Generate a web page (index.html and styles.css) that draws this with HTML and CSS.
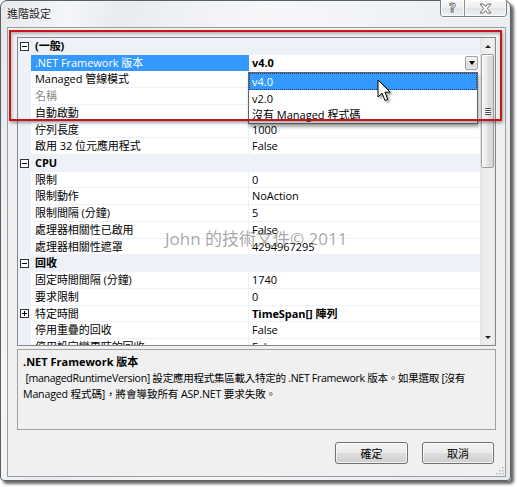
FILE: index.html
```html
<!DOCTYPE html>
<html lang="zh-Hant">
<head>
<meta charset="utf-8">
<title>進階設定</title>
<link rel="stylesheet" href="styles.css">
</head>
<body>
<div class="window">
  <div class="titlebar">
    <span class="title">進階設定</span>
    <div class="caption">
      <div class="cbtn help"><span class="qmark">?</span></div>
      <div class="cbtn close">
        <svg width="13" height="11" viewBox="0 0 13 11"><polygon points="1,1 4.5,1 6.5,3.6 8.5,1 12,1 8.3,5.5 12,10 8.5,10 6.5,7.4 4.5,10 1,10 4.7,5.5" fill="#fff" stroke="#6b6b6b" stroke-width="1" stroke-linejoin="round"/></svg>
      </div>
    </div>
  </div>
  <div class="client">
    <div class="grid">
      <div class="rows">
        <div class="row cat"><span class="gut"><i class="exp"></i></span><span class="cname">(一般)</span></div>
        <div class="row sel"><span class="gut"></span><span class="name">.NET Framework 版本</span><span class="val b">v4.0<span class="ddbtn"><i class="tri-down"></i></span></span></div>
        <div class="row"><span class="gut"></span><span class="name">Managed 管線模式</span><span class="val"></span></div>
        <div class="row"><span class="gut"></span><span class="name dis">名稱</span><span class="val"></span></div>
        <div class="row"><span class="gut"></span><span class="name">自動啟動</span><span class="val"></span></div>
        <div class="row"><span class="gut"></span><span class="name">佇列長度</span><span class="val">1000</span></div>
        <div class="row"><span class="gut"></span><span class="name">啟用 32 位元應用程式</span><span class="val">False</span></div>
        <div class="row cat"><span class="gut"><i class="exp"></i></span><span class="cname">CPU</span></div>
        <div class="row"><span class="gut"></span><span class="name">限制</span><span class="val">0</span></div>
        <div class="row"><span class="gut"></span><span class="name">限制動作</span><span class="val">NoAction</span></div>
        <div class="row"><span class="gut"></span><span class="name">限制間隔 (分鐘)</span><span class="val">5</span></div>
        <div class="row"><span class="gut"></span><span class="name">處理器相關性已啟用</span><span class="val">False</span></div>
        <div class="row"><span class="gut"></span><span class="name">處理器相關性遮罩</span><span class="val">4294967295</span></div>
        <div class="row cat"><span class="gut"><i class="exp"></i></span><span class="cname">回收</span></div>
        <div class="row"><span class="gut"></span><span class="name">固定時間間隔 (分鐘)</span><span class="val">1740</span></div>
        <div class="row"><span class="gut"></span><span class="name">要求限制</span><span class="val">0</span></div>
        <div class="row"><span class="gut pgut"><i class="exp plus"></i></span><span class="name">特定時間</span><span class="val b">TimeSpan[] 陣列</span></div>
        <div class="row"><span class="gut"></span><span class="name">停用重疊的回收</span><span class="val">False</span></div>
        <div class="row"><span class="gut"></span><span class="name">停用設定變更時的回收</span><span class="val">False</span></div>
      </div>
      <div class="sb">
        <div class="sb-btn"><i class="tri-up"></i></div>
        <div class="sb-track">
          <div class="thumb"><i class="grip"></i></div>
        </div>
        <div class="sb-btn"><i class="tri-down small"></i></div>
      </div>
      <div class="ddlist">
        <div class="ditem on">v4.0</div>
        <div class="ditem">v2.0</div>
        <div class="ditem">沒有 Managed 程式碼</div>
      </div>
    </div>
    <div class="desc">
      <div class="desc-title">.NET Framework 版本</div>
      <div class="desc-text"><span class="tight">&nbsp;[managedRuntimeVersion] 設定應用程式集區載入特定的 .NET Framework 版本。如果選取 [沒有</span><br>Managed 程式碼]，將會導致所有 ASP.NET 要求失敗。</div>
    </div>
    <div class="buttons">
      <div class="btn">確定</div>
      <div class="btn">取消</div>
    </div>
    <svg class="grip-corner" width="9" height="9" viewBox="0 0 9 9">
      <g fill="#b8b8b8"><rect x="7" y="1" width="1.5" height="1.5"/><rect x="4" y="4" width="1.5" height="1.5"/><rect x="7" y="4" width="1.5" height="1.5"/><rect x="1" y="7" width="1.5" height="1.5"/><rect x="4" y="7" width="1.5" height="1.5"/><rect x="7" y="7" width="1.5" height="1.5"/></g>
    </svg>
  </div>
</div>
<div class="annot"></div>
<div class="watermark">John 的技術文件© 2011</div>
<svg class="cursor" width="16" height="24" viewBox="0 0 16 24"><path d="M1,1 L1,18 L5,14.2 L8,21.5 L10.8,20.3 L7.9,13.2 L13.2,13.2 Z" fill="#fff" stroke="#000" stroke-width="1" stroke-linejoin="miter"/></svg>
</body>
</html>
```

FILE: styles.css
```css
* { box-sizing: border-box; }
html, body { margin: 0; padding: 0; }
body {
  width: 517px;
  height: 487px;
  position: relative;
  overflow: hidden;
  background: #ffffff;
  font-family: "Open Sans", "Noto Sans CJK TC", sans-serif;
  font-size: 11px;
  color: #000;
}

.window {
  width: 511px;
  height: 481px;
  border: 1px solid #5b5e62;
  border-radius: 7px 7px 4px 4px;
  background: linear-gradient(100deg, #e6e9ec 0%, #f4f6f8 12%, #e9ecef 20%, #f6f7f9 45%, #eef1f4 75%, #e6e9ec 100%);
  box-shadow: 3px 3px 3px rgba(0,0,0,0.6);
  display: flex;
  flex-direction: column;
  padding: 0 4px 3px 6px;
}

.titlebar {
  height: 26px;
  flex: none;
  display: flex;
  justify-content: space-between;
  align-items: flex-start;
}
.title {
  margin-top: 5px;
  line-height: 14px;
  font-family: "Noto Sans CJK TC", sans-serif;
  font-size: 11px;
  color: #1b1b1b;
  text-shadow: 0 0 4px #fff;
}
.caption {
  display: flex;
  margin-top: -1px;
  margin-right: -1px;
  height: 17px;
  border: 1px solid #7d7f83;
  border-top: none;
  border-radius: 0 0 4px 4px;
  overflow: hidden;
  box-shadow: 0 1px 0 rgba(255,255,255,0.8);
}
.cbtn {
  display: flex;
  align-items: center;
  justify-content: center;
  background: linear-gradient(#f7f8f9, #eceef0 50%, #e2e5e8 50%, #eef0f2);
  box-shadow: inset 0 0 0 1px rgba(255,255,255,0.7);
}
.help { width: 24px; border-right: 1px solid #8e9094; }
.close { width: 41px; }
.qmark {
  font-family: "DejaVu Sans", sans-serif;
  font-weight: bold;
  font-size: 12px;
  line-height: 12px;
  color: #fff;
  -webkit-text-stroke: 0.8px #666;
}

.client {
  position: relative;
  height: 450px;
  flex: none;
  border: 1px solid #9a9da1;
  background: #f0f0f0;
  padding: 9px 9px 0 9px;
  display: flex;
  flex-direction: column;
}

/* property grid */
.grid {
  --line: #eef2f8;
  position: relative;
  height: 309px;
  flex: none;
  border: 1px solid #828790;
  background: #fff;
  display: flex;
}
.rows {
  width: 462px;
  flex: none;
  overflow: hidden;
  display: flex;
  flex-direction: column;
}
.row {
  height: 16.72px;
  flex: none;
  display: flex;
  line-height: 15.7px;
  white-space: nowrap;
  letter-spacing: -0.05px;
}
.gut {
  width: 13px;
  flex: none;
  background: var(--line);
  display: flex;
  align-items: center;
  justify-content: center;
}
.name {
  width: 218px;
  flex: none;
  padding-left: 4px;
  border-right: 1px solid var(--line);
  border-bottom: 1px solid var(--line);
  overflow: hidden;
}
.name.dis { color: #8a8a8a; }
.val {
  flex: 1;
  padding-left: 3px;
  border-bottom: 1px solid var(--line);
  display: flex;
  align-items: center;
}
.b { font-weight: 700; }
.row.cat { background: var(--line); }
.cname {
  flex: 1;
  padding-left: 4px;
  font-weight: 700;
}
.row.sel .name {
  background: #3399ff;
  border-bottom-color: #3399ff;
  border-right-color: #3399ff;
  color: #fff;
}

.exp {
  position: relative;
  width: 9px;
  height: 9px;
  border: 1px solid #333;
  background: #fff;
}
.exp::before {
  content: "";
  position: absolute;
  left: 1px;
  top: 3px;
  width: 5px;
  height: 1px;
  background: #000;
}
.exp.plus::after {
  content: "";
  position: absolute;
  left: 3px;
  top: 1px;
  width: 1px;
  height: 5px;
  background: #000;
}

.ddbtn {
  margin-left: auto;
  margin-right: 2px;
  width: 13px;
  height: 14px;
  border: 1px solid #a3a3a3;
  border-radius: 2px;
  background: linear-gradient(#f6f6f6, #e6e6e6 50%, #dadada 50%, #e4e4e4);
  display: flex;
  align-items: center;
  justify-content: center;
}
.tri-down {
  width: 0;
  height: 0;
  border-left: 3.5px solid transparent;
  border-right: 3.5px solid transparent;
  border-top: 4px solid #000;
}
.tri-down.small, .tri-up { border-left-width: 3px; border-right-width: 3px; }
.tri-up {
  width: 0;
  height: 0;
  border-left: 3px solid transparent;
  border-right: 3px solid transparent;
  border-bottom: 3px solid #222;
}
.tri-down.small { border-top: 3px solid #222; }

/* scrollbar */
.sb {
  width: 15px;
  flex: none;
  display: flex;
  flex-direction: column;
  background: linear-gradient(to right, #e1e1e1, #ececec 20%, #f0f0f0 75%, #e6e6e6);
}
.sb-btn {
  height: 16px;
  flex: none;
  display: flex;
  align-items: center;
  justify-content: center;
}
.sb-track { flex: 1; }
.thumb {
  height: 114px;
  margin: 0 1px;
  border: 1px solid #9d9d9d;
  border-radius: 2px;
  background: linear-gradient(to right, #f3f3f3, #ebebeb 45%, #dedede 55%, #d6d6d6);
  box-shadow: inset 1px 1px 0 #fff;
  display: flex;
  align-items: center;
  justify-content: center;
}
.grip {
  width: 6px;
  height: 7px;
  background: repeating-linear-gradient(#555 0 1px, #fff 1px 2px);
}

/* dropdown list */
.ddlist {
  position: absolute;
  left: 230px;
  top: 34px;
  width: 230px;
  border: 1px solid #646464;
  background: #fff;
  box-shadow: 1px 3px 3px rgba(0,0,0,0.35);
}
.ditem {
  height: 16.72px;
  line-height: 15px;
  padding-left: 2px;
  white-space: nowrap;
  border: 1px solid transparent;
}
.ditem.on {
  background: #3399ff;
  color: #fff;
  border: 1px dotted #1d3f73;
}

/* description */
.desc {
  margin-top: 3px;
  height: 81px;
  flex: none;
  border: 1px solid #a0a0a0;
  padding: 4px 0 0 5px;
  line-height: 16px;
}
.desc-title { font-weight: 700; }
.desc-text {
  white-space: nowrap;
  font-size: 10.6px;
  letter-spacing: -0.15px;
}
.desc-text .tight { letter-spacing: -0.33px; }

.buttons {
  margin-top: 12px;
  display: flex;
  justify-content: flex-end;
  gap: 14px;
  padding-right: 2px;
}
.btn {
  width: 73px;
  height: 22px;
  border: 1px solid #707070;
  border-radius: 3px;
  background: linear-gradient(#f2f2f2 0%, #ebebeb 48%, #dddddd 52%, #cfcfcf 100%);
  box-shadow: inset 0 0 0 1px rgba(255,255,255,0.75);
  display: flex;
  align-items: center;
  justify-content: center;
  font-family: "Noto Sans CJK TC", sans-serif;
  font-size: 11px;
}
.btn + .btn { width: 72px; }

.grip-corner {
  position: absolute;
  right: 1px;
  bottom: 1px;
}

/* overlays */
.annot {
  position: absolute;
  left: 9px;
  top: 30px;
  width: 493px;
  height: 91px;
  border: 2px solid #c8141c;
  box-shadow: 1px 2px 3px rgba(0,0,0,0.35), inset 1px 2px 3px rgba(0,0,0,0.25);
}
.watermark {
  position: absolute;
  left: 165px;
  top: 229px;
  font-size: 17px;
  line-height: 20px;
  color: rgba(110,110,110,0.6);
  white-space: nowrap;
}
.cursor {
  position: absolute;
  left: 377px;
  top: 79px;
  filter: drop-shadow(2px 2px 1px rgba(0,0,0,0.35));
}
```
